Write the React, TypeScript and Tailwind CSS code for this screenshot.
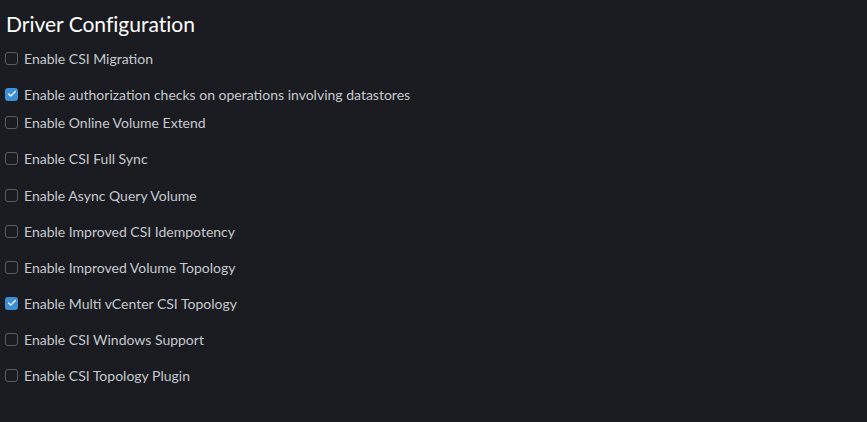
import { Check } from 'lucide-react'

type Option = { label: string; checked: boolean; mt: string }

const options: Option[] = [
  { label: 'Enable CSI Migration', checked: false, mt: 'mt-[10px]' },
  { label: 'Enable authorization checks on operations involving datastores', checked: true, mt: 'mt-4' },
  { label: 'Enable Online Volume Extend', checked: false, mt: 'mt-2' },
  { label: 'Enable CSI Full Sync', checked: false, mt: 'mt-4' },
  { label: 'Enable Async Query Volume', checked: false, mt: 'mt-[17px]' },
  { label: 'Enable Improved CSI Idempotency', checked: false, mt: 'mt-4' },
  { label: 'Enable Improved Volume Topology', checked: false, mt: 'mt-4' },
  { label: 'Enable Multi vCenter CSI Topology', checked: true, mt: 'mt-4' },
  { label: 'Enable CSI Windows Support', checked: false, mt: 'mt-4' },
  { label: 'Enable CSI Topology Plugin', checked: false, mt: 'mt-4' },
]

function CheckRow({ label, checked, mt }: Option) {
  return (
    <label className={`flex h-5 items-center gap-[6px] ${mt}`}>
      {checked ? (
        <span className="flex h-[13px] w-[13px] items-center justify-center rounded-[3px] bg-[#3d8fd6]">
          <Check size={10} strokeWidth={3} className="text-white" />
        </span>
      ) : (
        <span className="h-[13px] w-[13px] rounded-[3px] border border-[#5a5d63] bg-transparent" />
      )}
      <span className="text-[14px] text-[#c6c9ce]">{label}</span>
    </label>
  )
}

export default function App() {
  return (
    <div
      className="h-[422px] w-[867px] bg-[#1b1c21] px-[5px] pt-[10px]"
      style={{ fontFamily: 'Lato, "Noto Sans", sans-serif' }}
    >
      <h2 className="h-7 pl-[1px] text-[21px] leading-7 text-white [font-variant-ligatures:none]">
        Driver Configuration
      </h2>
      <div className="flex flex-col">
        {options.map((o) => (
          <CheckRow key={o.label} {...o} />
        ))}
      </div>
    </div>
  )
}
